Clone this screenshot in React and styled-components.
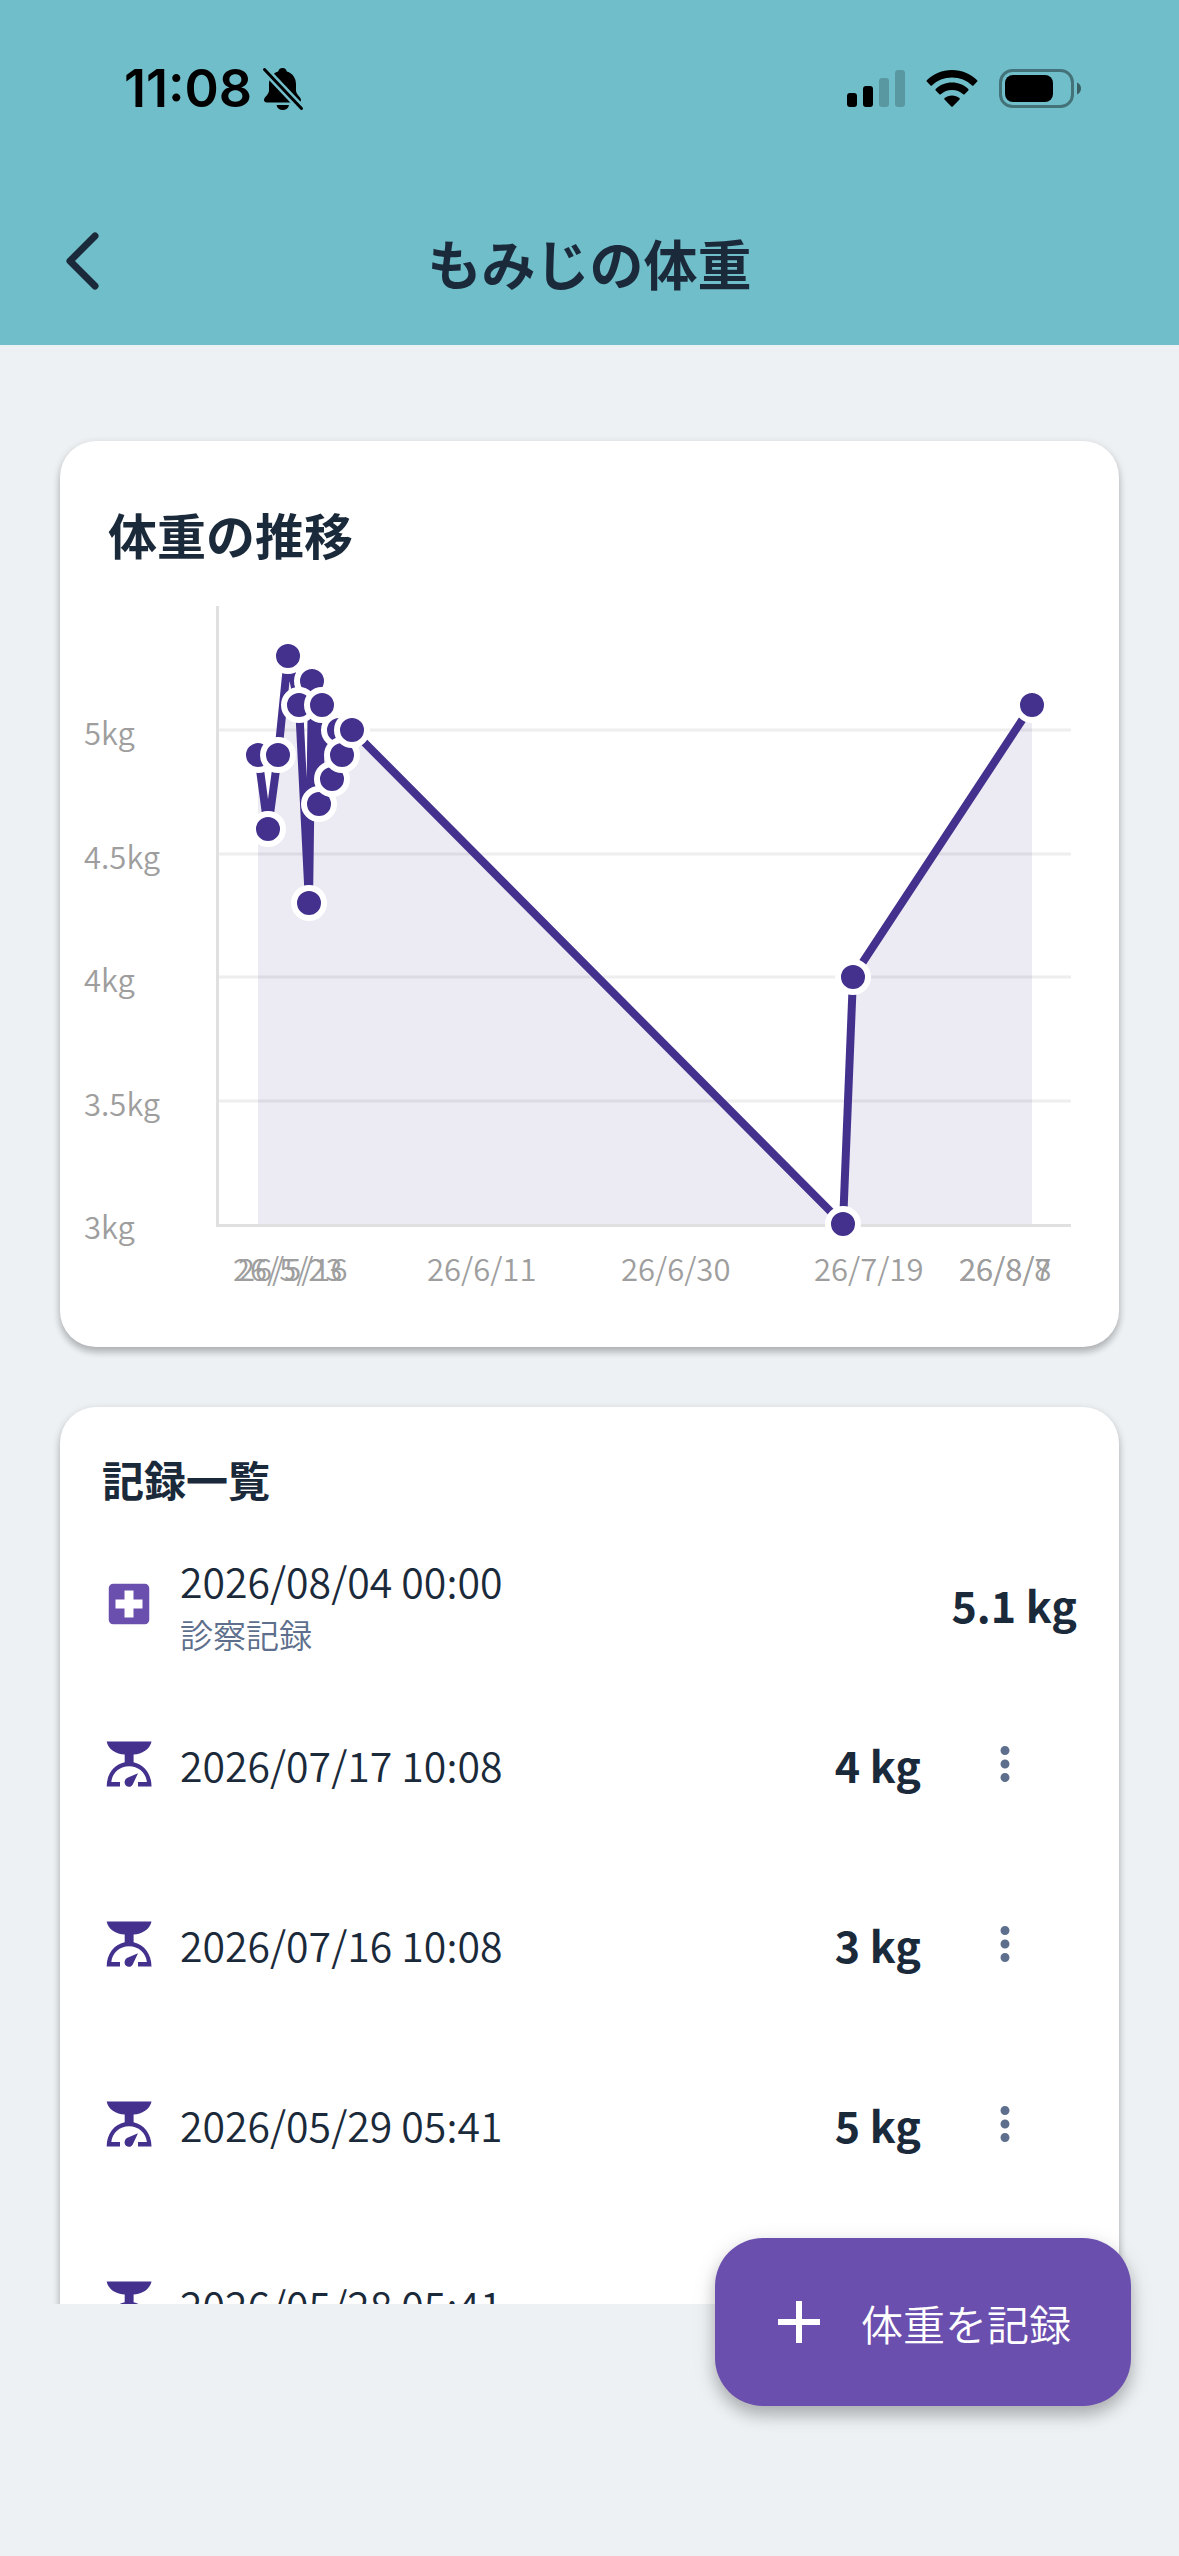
import React from "react";
import styled, { createGlobalStyle } from "styled-components";
import { MdLocalHospital, MdMoreVert } from "react-icons/md";

const records = [
  { date: "2026/08/04 00:00", weight: "5.1 kg", note: "診察記録" },
  { date: "2026/07/17 10:08", weight: "4 kg" },
  { date: "2026/07/16 10:08", weight: "3 kg" },
  { date: "2026/05/29 05:41", weight: "5 kg" },
  { date: "2026/05/28 05:41", weight: "4.9 kg" },
];

const points = [
  { x: 198, kg: 4.9 },
  { x: 208, kg: 4.6 },
  { x: 218, kg: 4.9 },
  { x: 228, kg: 5.3 },
  { x: 239, kg: 5.1 },
  { x: 249, kg: 4.3 },
  { x: 252, kg: 5.2, behind: true },
  { x: 259, kg: 4.7 },
  { x: 262, kg: 5.1 },
  { x: 272, kg: 4.8 },
  { x: 279, kg: 5 },
  { x: 282, kg: 4.9 },
  { x: 292, kg: 5 },
  { x: 783, kg: 3 },
  { x: 793, kg: 4 },
  { x: 972, kg: 5.1 },
];

const yTicks = [5, 4.5, 4, 3.5, 3];

const xTicks = [
  { x: 173, label: "26/5/23" },
  { x: 178, label: "26/5/16" },
  { x: 367, label: "26/6/11" },
  { x: 561, label: "26/6/30" },
  { x: 754, label: "26/7/19" },
  { x: 899, label: "26/8/7" },
  { x: 899, label: "26/8/8" },
];

const BASE = 634;
const toY = (kg) => Math.round(BASE - (kg - 3) * 247);

const WeightChart = () => {
  const line = points.map((p) => `${p.x},${toY(p.kg)}`).join(" ");
  const dots = [
    ...points.filter((p) => p.behind),
    ...points.filter((p) => !p.behind),
  ];

  return (
    <Chart viewBox="0 0 1059 757" role="img" aria-label="体重の推移">
      {yTicks.map((kg) => (
        <g key={kg}>
          {kg > 3 && <GridLine x1="159" x2="1011" y1={toY(kg)} y2={toY(kg)} />}
          <AxisLabel x="24" y={toY(kg) + 15}>
            {kg}kg
          </AxisLabel>
        </g>
      ))}
      <Axis d={`M157.5 16V${BASE + 1.5}H1011`} />
      <Area points={`198,${BASE} ${line} 972,${BASE}`} />
      <Line points={line} />
      {dots.map((p) => (
        <Dot key={p.x} cx={p.x} cy={toY(p.kg)} r="15" />
      ))}
      {xTicks.map((tick) => (
        <AxisLabel key={tick.label} x={tick.x} y="691">
          {tick.label}
        </AxisLabel>
      ))}
    </Chart>
  );
};

const ScaleIcon = () => (
  <svg width="54" height="54" viewBox="0 0 54 54" fill="currentColor">
    <path d="M4.7 4.5H49.5C48 12 40 17.4 31.6 17.5V25.3C42 27.5 49.5 37 49.5 49.5H36V45H44.9C44 36 36.5 29.3 27.1 29.3S10.2 36 9.3 45H18V49.5H4.7C4.7 37 12 27.5 22.7 25.3V17.5C14 17.4 6 12 4.7 4.5Z" />
    <path d="M36 36.3L31.2 46.5C30.3 49 28.5 50 26.5 49.8C23.5 49.4 22 46.5 22.8 44C23.3 42 24.5 41.3 26 40.6Z" />
  </svg>
);

const BellOffIcon = () => (
  <svg width="42" height="44" viewBox="0 0 42 44">
    <path d="M20.500 1c2.600 0 4 1.600 4.300 3.600C31 6.500 34 11.500 34 17.500v6c0 4 5 6.500 5 9.500 0 1.600-1 2.500-3 2.500H5c-2 0-3-1-3-2.500 0-3 5-5.500 5-9.500v-6C7 11.500 10 6.500 16.200 4.600 16.500 2.600 18 1 20.500 1z" />
    <path d="M14.500 38h12.500c-.6 3.200-3 5-6.200 5s-5.700-1.800-6.300-5z" />
    <path d="M3 3L39 41" stroke="#70bec9" strokeWidth="8" />
    <path d="M2.500 2.500L39.500 41.500" stroke="#000" strokeWidth="3" strokeLinecap="round" />
  </svg>
);

const SignalIcon = () => (
  <svg width="58" height="38" viewBox="0 0 58 38">
    <rect x="0" y="23" width="10" height="14" rx="3" />
    <rect x="16" y="16" width="10" height="21" rx="3" />
    <rect x="32" y="8" width="10" height="29" rx="3" opacity=".2" />
    <rect x="48" y="0" width="10" height="37" rx="3" opacity=".2" />
  </svg>
);

const WifiIcon = () => (
  <svg width="52" height="38" viewBox="0 0 52 38">
    <path d="M26 0c9.800 0 18.700 3.900 25.200 10.200.4.400.4 1 0 1.400l-3.700 3.800c-.4.400-1 .4-1.400 0C40.900 10.500 33.800 7.500 26 7.500S11.100 10.500 5.900 15.400c-.4.400-1 .4-1.400 0L.8 11.600c-.4-.4-.4-1 0-1.400C7.300 3.900 16.200 0 26 0z" />
    <path d="M26 12.600c6.300 0 12 2.400 16.300 6.400.4.400.4 1 0 1.400l-3.700 3.800c-.4.400-1 .4-1.400 0-3-2.700-6.900-4.200-11.200-4.200s-8.200 1.500-11.200 4.200c-.4.400-1 .4-1.400 0l-3.700-3.800c-.4-.4-.4-1 0-1.400C14 15 19.700 12.600 26 12.600z" />
    <path d="M26 25.500c2.800 0 5.400 1 7.400 2.600.5.400.5 1 .1 1.400l-6.800 7c-.4.400-1 .4-1.400 0l-6.800-7c-.4-.4-.4-1 .1-1.400 2-1.600 4.600-2.600 7.400-2.600z" />
  </svg>
);

const BatteryIcon = () => (
  <svg width="82" height="40" viewBox="0 0 82 40">
    <rect x="1.500" y="1.500" width="72" height="36" rx="12" fill="none" stroke="#000" strokeOpacity=".4" strokeWidth="3" />
    <rect x="6" y="6" width="48" height="27" rx="8" />
    <path d="M78 13.500c2.400 1 4 3.300 4 6s-1.600 5-4 6z" opacity=".5" />
  </svg>
);

const App = () => {
  return (
    <>
      <GlobalStyle />
      <Screen>
        <Header>
          <StatusBar>
            <Clock>
              11:08
              <BellOffIcon />
            </Clock>
            <StatusIcons>
              <SignalIcon />
              <WifiIcon />
              <BatteryIcon />
            </StatusIcons>
          </StatusBar>
          <AppBar>
            <BackButton aria-label="戻る">
              <svg width="36" height="60" viewBox="0 0 36 60" fill="none">
                <path
                  d="M30 5L5 30L30 55"
                  stroke="currentColor"
                  strokeWidth="7"
                  strokeLinecap="round"
                  strokeLinejoin="round"
                />
              </svg>
            </BackButton>
            <Title>もみじの体重</Title>
          </AppBar>
        </Header>
        <Content>
          <Card>
            <ChartTitle>体重の推移</ChartTitle>
            <WeightChart />
          </Card>
          <Card>
            <ListTitle>記録一覧</ListTitle>
            <List>
              {records.map((record) => (
                <Row key={record.date} $short={Boolean(record.note)}>
                  <RowIcon $light={Boolean(record.note)}>
                    {record.note ? <MdLocalHospital size={54} /> : <ScaleIcon />}
                  </RowIcon>
                  <RowText>
                    <RowDate>{record.date}</RowDate>
                    {record.note && <RowNote>{record.note}</RowNote>}
                  </RowText>
                  <Weight>{record.weight}</Weight>
                  {!record.note && (
                    <MenuButton aria-label="メニュー">
                      <MdMoreVert size={54} />
                    </MenuButton>
                  )}
                </Row>
              ))}
            </List>
          </Card>
        </Content>
        <AddButton>
          <svg width="72" height="72" viewBox="0 0 72 72" aria-hidden="true">
            <path d="M36 15V57M15 36H57" stroke="currentColor" strokeWidth="6" />
          </svg>
          体重を記録
        </AddButton>
      </Screen>
    </>
  );
};

export default App;

const GlobalStyle = createGlobalStyle`
  * {
    box-sizing: border-box;
  }

  body {
    margin: 0;
    background: #edf1f4;
    color: #1b2a3a;
    font-family: "Noto Sans CJK JP", sans-serif;
    font-weight: 350;
  }

  svg {
    display: block;
    flex-shrink: 0;
  }
`;

const Screen = styled.div`
  position: relative;
  display: flex;
  flex-direction: column;
  height: 100vh;
  padding-bottom: 252px;
`;

const Header = styled.header`
  flex-shrink: 0;
  background: #70bec9;
`;

const StatusBar = styled.div`
  display: flex;
  justify-content: space-between;
  align-items: center;
  height: 177px;
  padding: 0 98px 0 124px;
`;

const Clock = styled.div`
  display: flex;
  align-items: center;
  gap: 10px;
  color: #000;
  font-family: Inter, sans-serif;
  font-size: 52px;
  font-weight: 600;
`;

const StatusIcons = styled.div`
  display: flex;
  align-items: center;
  gap: 21px;
`;

const AppBar = styled.div`
  display: grid;
  grid-template-columns: 168px 1fr 168px;
  align-items: center;
  height: 168px;
`;

const IconButton = styled.button`
  display: flex;
  justify-content: center;
  align-items: center;
  width: 144px;
  height: 144px;
  padding: 0;
  border: none;
  background: none;
  cursor: pointer;
`;

const BackButton = styled(IconButton)`
  width: 166px;
  color: #1b2a3a;
`;

const Title = styled.h1`
  margin: 0;
  padding-top: 4px;
  font-size: 54px;
  font-weight: 700;
  line-height: 72px;
  text-align: center;
`;

const Content = styled.main`
  flex: 1;
  display: flex;
  flex-direction: column;
  gap: 60px;
  min-height: 0;
  padding: 96px 60px 0;
  overflow: hidden;
`;

const Card = styled.section`
  flex-shrink: 0;
  background: #fff;
  border-radius: 36px;
  box-shadow: 0 3px 9px rgba(0, 0, 0, 0.2), 0 6px 6px rgba(0, 0, 0, 0.12);
`;

const ChartTitle = styled.h2`
  margin: 0;
  padding: 57px 48px 20px;
  font-size: 49px;
  font-weight: 700;
  line-height: 72px;
`;

const Chart = styled.svg`
  width: 100%;
  height: auto;
`;

const GridLine = styled.line`
  stroke: #eeeeee;
  stroke-width: 3;
`;

const Axis = styled.path`
  fill: none;
  stroke: #e0e0e0;
  stroke-width: 3;
`;

const AxisLabel = styled.text`
  fill: #9e9e9e;
  font-size: 31px;
`;

const Area = styled.polygon`
  fill: rgba(68, 49, 141, 0.1);
`;

const Line = styled.polyline`
  fill: none;
  stroke: #44318d;
  stroke-width: 8;
  stroke-linejoin: round;
`;

const Dot = styled.circle`
  fill: #44318d;
  stroke: #fff;
  stroke-width: 6;
`;

const ListTitle = styled.h2`
  margin: 0;
  padding: 42px 42px 24px;
  font-size: 42px;
  font-weight: 700;
  line-height: 60px;
`;

const List = styled.ul`
  margin: 0;
  padding: 0;
  list-style: none;
`;

const Row = styled.li`
  display: flex;
  align-items: center;
  height: ${(props) => (props.$short ? "141px" : "180px")};
  padding: 0 42px;
`;

const RowIcon = styled.div`
  margin-right: 24px;
  color: ${(props) => (props.$light ? "#6b4fae" : "#44318d")};
`;

const RowText = styled.div`
  flex: 1;
`;

const RowDate = styled.div`
  font-size: 41px;
  line-height: 60px;
`;

const RowNote = styled.div`
  color: #5d6f8c;
  font-size: 33px;
  line-height: 48px;
`;

const Weight = styled.div`
  font-size: 43px;
  font-weight: 700;
  line-height: 60px;
`;

const MenuButton = styled(IconButton)`
  margin-left: 12px;
  color: #5d6f8c;
`;

const AddButton = styled.button`
  position: absolute;
  right: 48px;
  bottom: 150px;
  display: flex;
  align-items: center;
  gap: 26px;
  height: 168px;
  padding: 0 60px 0 48px;
  border: none;
  border-radius: 48px;
  background: #6b4fae;
  box-shadow: 0 9px 15px rgba(0, 0, 0, 0.2), 0 6px 24px rgba(0, 0, 0, 0.12);
  color: #fff;
  font-family: inherit;
  font-size: 42px;
  font-weight: 350;
  cursor: pointer;
`;
